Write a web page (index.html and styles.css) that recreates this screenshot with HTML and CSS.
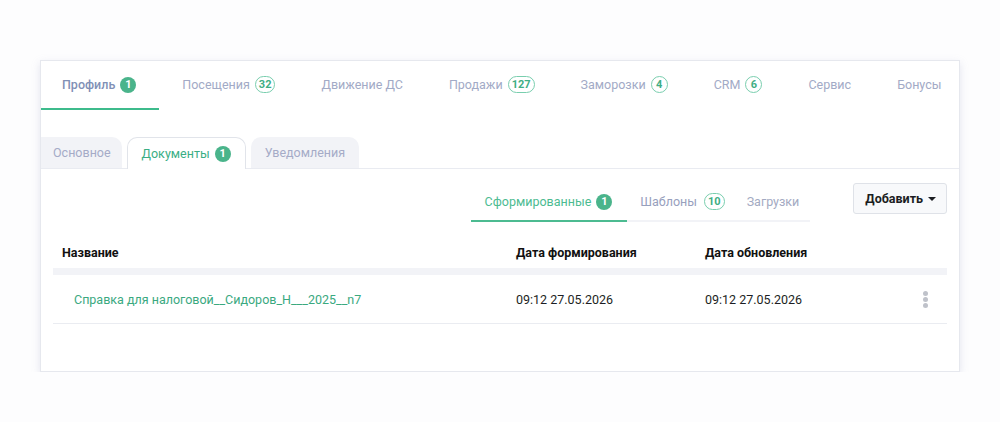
FILE: index.html
```html
<!DOCTYPE html>
<html lang="ru">
<head>
    <meta charset="UTF-8">
    <meta name="viewport" content="width=device-width, initial-scale=1.0">
    <title>Клиент — документы</title>
    <link rel="stylesheet" href="styles.css">
</head>
<body>
    <div class="card">
        <div class="main-tabs">
            <div class="main-tab active">Профиль <span class="badge">1</span></div>
            <div class="main-tab">Посещения <span class="badge outline">32</span></div>
            <div class="main-tab">Движение ДС</div>
            <div class="main-tab">Продажи <span class="badge outline">127</span></div>
            <div class="main-tab">Заморозки <span class="badge outline">4</span></div>
            <div class="main-tab">CRM <span class="badge outline">6</span></div>
            <div class="main-tab">Сервис</div>
            <div class="main-tab">Бонусы</div>
        </div>

        <div class="sub-tabs">
            <div class="sub-tab">Основное</div>
            <div class="sub-tab active">Документы <span class="badge">1</span></div>
            <div class="sub-tab">Уведомления</div>
        </div>

        <div class="toolbar">
            <div class="doc-tabs">
                <div class="doc-tab active">Сформированные <span class="badge">1</span></div>
                <div class="doc-tab">Шаблоны <span class="badge outline">10</span></div>
                <div class="doc-tab">Загрузки</div>
            </div>
            <button class="add-btn">Добавить <span class="caret"></span></button>
        </div>

        <div class="table">
            <div class="row head">
                <div class="cell first">Название</div>
                <div class="cell">Дата формирования</div>
                <div class="cell">Дата обновления</div>
                <div class="cell"></div>
            </div>
            <div class="row">
                <div class="cell first"><a class="doc-link" href="#">Справка для налоговой__Сидоров_Н___2025__n7</a></div>
                <div class="cell">09:12 27.05.2026</div>
                <div class="cell">09:12 27.05.2026</div>
                <div class="cell menu"><span class="kebab"><i></i><i></i><i></i></span></div>
            </div>
        </div>
    </div>
</body>
</html>
```

FILE: styles.css
```css
body {
    margin: 0;
    padding: 60px 40px 0;
    background-color: #fdfdfe;
    font-family: Roboto, "Liberation Sans", Arial, sans-serif;
    font-size: 12.5px;
    color: #1d1f24;
}

.card {
    background-color: white;
    border: 1px solid #e6e8ee;
    box-shadow: 0 3px 8px rgba(160, 165, 200, 0.28);
    height: 312px;
    box-sizing: border-box;
}

.badge {
    display: inline-flex;
    align-items: center;
    justify-content: center;
    min-width: 16px;
    height: 16px;
    padding: 0 4px;
    box-sizing: border-box;
    border-radius: 9px;
    background-color: #4ab48b;
    color: white;
    font-size: 11px;
    font-weight: 700;
}

.badge.outline {
    height: 17px;
    min-width: 17px;
    background-color: white;
    border: 1px solid #79ceae;
    color: #3fae84;
    padding: 0 3px;
}

.main-tabs {
    display: flex;
}

.main-tab {
    display: flex;
    flex-shrink: 0;
    align-items: center;
    gap: 5px;
    height: 47px;
    padding: 0 23px;
    border-bottom: 2px solid transparent;
    color: #a2aac6;
    white-space: nowrap;
}

.main-tab:first-child {
    padding-left: 21px;
}

.main-tab.active {
    color: #8190b6;
    font-weight: 500;
    border-bottom-color: #3dbb8c;
}

.sub-tabs {
    display: flex;
    gap: 5px;
    margin-top: 27px;
    border-bottom: 1px solid #e9ebf1;
    height: 31px;
}

.sub-tab {
    display: flex;
    align-items: center;
    gap: 5px;
    height: 31px;
    padding: 0 14px;
    background-color: #f2f3f7;
    border-radius: 10px 10px 0 0;
    color: #a5abc7;
    box-sizing: border-box;
    white-space: nowrap;
}

.sub-tab:first-child {
    border-top-left-radius: 0;
    padding-left: 12px;
    padding-right: 11px;
}

.sub-tab.active {
    background-color: white;
    border: 1px solid #e1e4ea;
    border-bottom: none;
    height: 32px;
    color: #3aae84;
}

.toolbar {
    display: flex;
    align-items: flex-start;
    justify-content: flex-end;
    padding: 14px 12px 0;
}

.doc-tabs {
    display: flex;
    border-bottom: 2px solid #f2f3f7;
    margin-right: 43px;
}

.doc-tab {
    display: flex;
    align-items: center;
    gap: 7px;
    height: 37px;
    padding: 0 10px 0 13px;
    color: #97a0bd;
    border-bottom: 2px solid transparent;
    margin-bottom: -2px;
    white-space: nowrap;
}

.doc-tab.active {
    gap: 5px;
    padding: 0 15px 0 14px;
    color: #4cbb91;
    border-bottom-color: #4cbb91;
}

.doc-tab:last-child {
    padding-left: 12px;
    padding-right: 11px;
    color: #a3aac2;
}

.add-btn {
    display: flex;
    align-items: center;
    gap: 5px;
    height: 31px;
    padding: 0 10px 0 11px;
    border: 1px solid #dfe2e8;
    border-radius: 3px;
    background-color: #f8f9fb;
    font-family: inherit;
    font-size: 12.5px;
    font-weight: 700;
    color: #1b1d22;
}

.caret {
    width: 0;
    height: 0;
    border-left: 4px solid transparent;
    border-right: 4px solid transparent;
    border-top: 4px solid #1b1d22;
}

.table {
    margin: 0 12px;
}

.row {
    display: grid;
    grid-template-columns: 463px 189px 1fr 44px;
    align-items: center;
    height: 49px;
    border-bottom: 1px solid #eaecf1;
    box-sizing: border-box;
}

.row.head {
    height: 53px;
    align-items: end;
    padding-bottom: 8px;
    border-bottom: 7px solid #f2f3f7;
    font-weight: 700;
    color: #111;
}

.row.head .cell.first {
    padding-left: 9px;
}

.cell.first {
    padding-left: 21px;
}

.doc-link {
    color: #3aa97f;
    text-decoration: none;
}

.cell.menu {
    display: flex;
    justify-content: center;
}

.kebab {
    display: flex;
    flex-direction: column;
    gap: 1px;
}

.kebab i {
    width: 5px;
    height: 5px;
    border-radius: 50%;
    background-color: #bfc2ca;
}
```
